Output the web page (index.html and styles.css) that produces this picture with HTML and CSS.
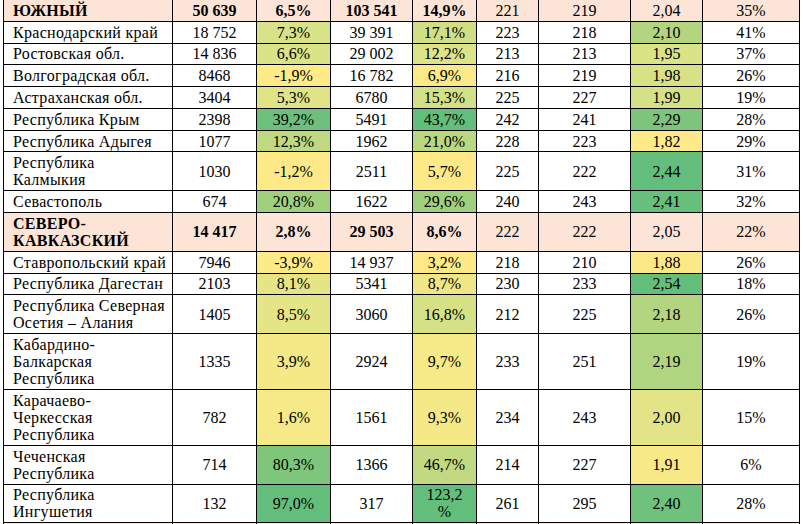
FILE: index.html
```html
<!DOCTYPE html>
<html lang="ru">
<head>
<meta charset="utf-8">
<title>Таблица по округам</title>
<link rel="stylesheet" href="styles.css">
</head>
<body>
<table class="stats">
  <colgroup>
    <col class="c-name">
    <col class="c-a">
    <col class="c-b">
    <col class="c-c">
    <col class="c-d">
    <col class="c-e">
    <col class="c-f">
    <col class="c-g">
    <col class="c-h">
  </colgroup>
  <tbody>
    <tr class="district">
      <td class="name">ЮЖНЫЙ</td><td class="b">50 639</td><td class="b">6,5%</td><td class="b">103 541</td><td class="b">14,9%</td><td>221</td><td>219</td><td>2,04</td><td>35%</td>
    </tr>
    <tr>
      <td class="name">Краснодарский край</td><td>18 752</td><td style="background:#d8e288">7,3%</td><td>39 391</td><td style="background:#d0df86">17,1%</td><td>223</td><td>218</td><td style="background:#b3d57f">2,10</td><td>41%</td>
    </tr>
    <tr>
      <td class="name">Ростовская обл.</td><td>14 836</td><td style="background:#dae388">6,6%</td><td>29 002</td><td style="background:#dce388">12,2%</td><td>213</td><td>213</td><td style="background:#dbe387">1,95</td><td>37%</td>
    </tr>
    <tr>
      <td class="name">Волгоградская обл.</td><td>8468</td><td style="background:#ffea88">-1,9%</td><td>16 782</td><td style="background:#fce987">6,9%</td><td>216</td><td>219</td><td style="background:#d7e286">1,98</td><td>26%</td>
    </tr>
    <tr>
      <td class="name">Астраханская обл.</td><td>3404</td><td style="background:#dfe487">5,3%</td><td>6780</td><td style="background:#d3e086">15,3%</td><td>225</td><td>227</td><td style="background:#d5e186">1,99</td><td>19%</td>
    </tr>
    <tr>
      <td class="name">Республика Крым</td><td>2398</td><td style="background:#6cc07c">39,2%</td><td>5491</td><td style="background:#63be7b">43,7%</td><td>242</td><td>241</td><td style="background:#7dc57c">2,29</td><td>28%</td>
    </tr>
    <tr>
      <td class="name">Республика Адыгея</td><td>1077</td><td style="background:#bfd981">12,3%</td><td>1962</td><td style="background:#b9d880">21,0%</td><td>228</td><td>223</td><td style="background:#feea88">1,82</td><td>29%</td>
    </tr>
    <tr>
      <td class="name">Республика<br>Калмыкия</td><td>1030</td><td style="background:#fde988">-1,2%</td><td>2511</td><td style="background:#fde988">5,7%</td><td>225</td><td>222</td><td style="background:#63be7b">2,44</td><td>31%</td>
    </tr>
    <tr>
      <td class="name">Севастополь</td><td>674</td><td style="background:#a0cf7e">20,8%</td><td>1622</td><td style="background:#a0cf7e">29,6%</td><td>240</td><td>243</td><td style="background:#66bf7b">2,41</td><td>32%</td>
    </tr>
    <tr class="district">
      <td class="name">СЕВЕРО-<br>КАВКАЗСКИЙ</td><td class="b">14 417</td><td class="b">2,8%</td><td class="b">29 503</td><td class="b">8,6%</td><td>222</td><td>222</td><td>2,05</td><td>22%</td>
    </tr>
    <tr>
      <td class="name">Ставропольский край</td><td>7946</td><td style="background:#ffea88">-3,9%</td><td>14 937</td><td style="background:#fde988">3,2%</td><td>218</td><td>210</td><td style="background:#fbe988">1,88</td><td>26%</td>
    </tr>
    <tr>
      <td class="name">Республика Дагестан</td><td>2103</td><td style="background:#e6e586">8,1%</td><td>5341</td><td style="background:#efe786">8,7%</td><td>230</td><td>233</td><td style="background:#63be7b">2,54</td><td>18%</td>
    </tr>
    <tr>
      <td class="name">Республика Северная<br>Осетия – Алания</td><td>1405</td><td style="background:#e4e586">8,5%</td><td>3060</td><td style="background:#d6e186">16,8%</td><td>212</td><td>225</td><td style="background:#b3d57f">2,18</td><td>26%</td>
    </tr>
    <tr>
      <td class="name">Кабардино-<br>Балкарская<br>Республика</td><td>1335</td><td style="background:#f4e887">3,9%</td><td>2924</td><td style="background:#f6e987">9,7%</td><td>233</td><td>251</td><td style="background:#b0d580">2,19</td><td>19%</td>
    </tr>
    <tr>
      <td class="name">Карачаево-<br>Черкесская<br>Республика</td><td>782</td><td style="background:#f6e987">1,6%</td><td>1561</td><td style="background:#f4e887">9,3%</td><td>234</td><td>243</td><td style="background:#e2e487">2,00</td><td>15%</td>
    </tr>
    <tr>
      <td class="name">Чеченская<br>Республика</td><td>714</td><td style="background:#7ec67c">80,3%</td><td>1366</td><td style="background:#c1da82">46,7%</td><td>214</td><td>227</td><td style="background:#f7e987">1,91</td><td>6%</td>
    </tr>
    <tr>
      <td class="name">Республика<br>Ингушетия</td><td>132</td><td style="background:#63be7b">97,0%</td><td>317</td><td style="background:#63be7b">123,2<br>%</td><td>261</td><td>295</td><td style="background:#6fc27c">2,40</td><td>28%</td>
    </tr>
    <tr class="district">
      <td class="name">ПРИВОЛЖСКИЙ</td><td class="b">45 120</td><td class="b">4,1%</td><td class="b">96 215</td><td class="b">10,2%</td><td>219</td><td>221</td><td>2,13</td><td>30%</td>
    </tr>
  </tbody>
</table>
</body>
</html>
```

FILE: styles.css
```css
html, body {
  margin: 0;
  padding: 0;
  background: #ffffff;
}

body {
  overflow: hidden;
}

.stats {
  margin: -1px 0 0 3px;
  width: 796px;
  table-layout: fixed;
  border-collapse: collapse;
  font-family: "Liberation Serif", "Times New Roman", serif;
  font-size: 16px;
  line-height: 17px;
  color: #000000;
}

.c-name { width: 169px; }
.c-a { width: 84px; }
.c-b { width: 74px; }
.c-c { width: 82px; }
.c-d { width: 64px; }
.c-e { width: 62px; }
.c-f { width: 92px; }
.c-g { width: 72px; }
.c-h { width: 97px; }

.stats td {
  border: 1px solid #000000;
  padding: 1.9px 4px;
  text-align: center;
  vertical-align: middle;
  overflow: hidden;
}

.stats td.name {
  text-align: left;
  padding-left: 9px;
  padding-right: 0;
  letter-spacing: 0.3px;
  white-space: nowrap;
}

.district td {
  background: #fce4d6;
}

.district td.name,
.district td.b {
  font-weight: bold;
}
```
